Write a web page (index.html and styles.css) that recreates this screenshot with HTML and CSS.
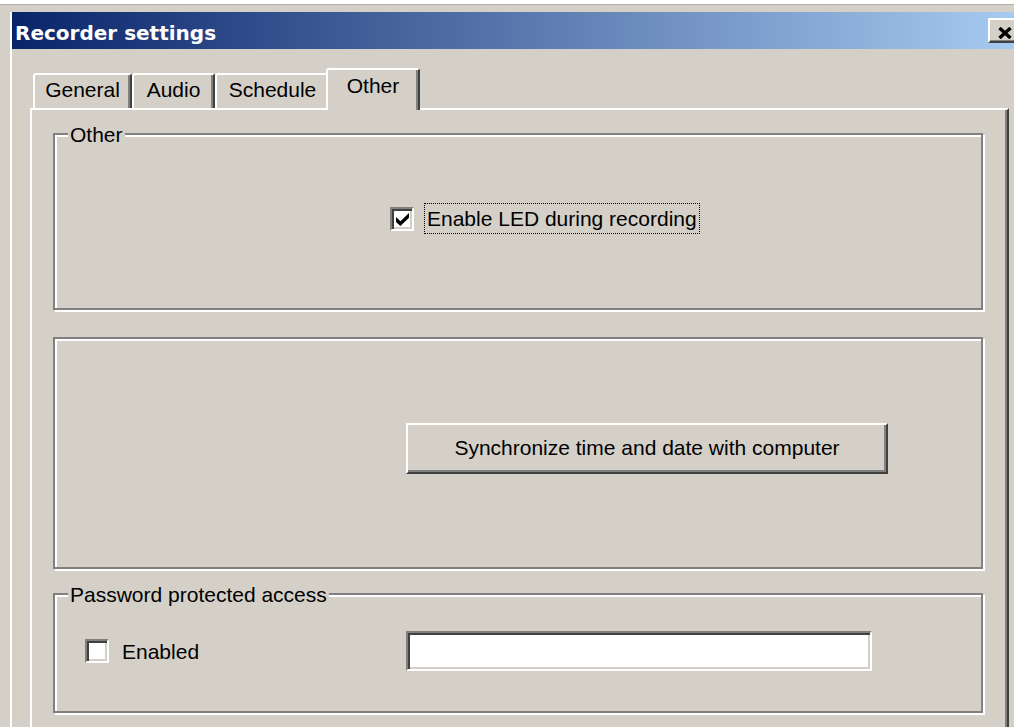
FILE: index.html
```html
<!DOCTYPE html>
<html lang="en">
<head>
<meta charset="utf-8">
<title>Recorder settings</title>
<link rel="stylesheet" href="styles.css">
</head>
<body>
<div class="window">
  <div class="frame">
    <div class="titlebar">
      <span class="title">Recorder settings</span>
      <span class="close-btn" aria-label="Close">
        <svg width="14" height="12" viewBox="0 0 14 12"><path d="M1.5 1 L12.5 11 M12.5 1 L1.5 11" stroke="#000" stroke-width="3.4" fill="none"/></svg>
      </span>
    </div>
    <div class="client">
      <div class="tabs">
        <div class="tab tab-general">General</div>
        <div class="tab tab-audio">Audio</div>
        <div class="tab tab-schedule">Schedule</div>
        <div class="tab tab-other active">Other</div>
      </div>
      <div class="panel">
        <div class="group group-led">
          <span class="group-label">Other</span>
          <label class="check-row">
            <span class="checkbox">
              <svg width="13" height="13" viewBox="0 0 7 7"><path d="M0 2.2 L2.4 4.4 L7 0 L7 2.6 L2.4 7 L0 4.8 Z" fill="#000"/></svg>
            </span>
            <span class="check-text focused">Enable LED during recording</span>
          </label>
        </div>
        <div class="group group-sync">
          <button class="btn" type="button">Synchronize time and date with computer</button>
        </div>
        <div class="group group-pass">
          <span class="group-label">Password protected access</span>
          <div class="pass-row">
            <label class="check-row">
              <span class="checkbox"></span>
              <span class="check-text">Enabled</span>
            </label>
            <span class="textbox"></span>
          </div>
        </div>
      </div>
    </div>
  </div>
</div>
</body>
</html>
```

FILE: styles.css
```css
* {
  box-sizing: border-box;
}

html,
body {
  margin: 0;
  height: 100%;
  overflow: hidden;
  background: #ffffff;
}

body {
  font-family: "Liberation Sans", Arial, sans-serif;
  font-size: 21px;
  line-height: 24px;
  color: #000000;
}

/* Window frame */
.window {
  width: 1014px;
  height: 723px;
  margin-top: 4px;
  border-top: 1px solid #b4b1aa;
  background: #d4d0c8;
  padding: 7px 0 0 10px;
  overflow: hidden;
}

.frame {
  height: 100%;
  border-left: 2px solid #ffffff;
}

/* Caption bar */
.titlebar {
  display: flex;
  align-items: flex-start;
  height: 37px;
  background: linear-gradient(to right, #0a246a 0%, #a6caf0 100%);
}

.title {
  padding: 9px 0 0 3px;
  font-family: "DejaVu Sans", Verdana, sans-serif;
  font-weight: bold;
  font-size: 20px;
  line-height: 24px;
  color: #ffffff;
}

.close-btn {
  display: block;
  flex: none;
  width: 29px;
  height: 25px;
  margin: 6px -3px 0 auto;
  padding: 7px 0 0 8px;
  background: #d4d0c8;
  border: 2px solid;
  border-color: #ffffff #404040 #404040 #ffffff;
  box-shadow: inset -1px -1px 0 #808080;
}

.close-btn svg {
  display: block;
}

/* Client area */
.client {
  padding-left: 18px;
}

.tabs {
  display: flex;
  align-items: flex-end;
  height: 40px;
  margin: 19px 0 0 3px;
}

.tab {
  height: 35px;
  padding-top: 3px;
  text-align: center;
  background: #d4d0c8;
  border-top: 2px solid #ffffff;
  border-left: 2px solid #ffffff;
  border-right: 2px solid #404040;
  border-radius: 3px 3px 0 0;
  box-shadow: inset -2px 0 0 #808080;
}

.tab-general {
  width: 99px;
}

.tab-audio {
  width: 83px;
}

.tab-schedule {
  width: 115px;
}

.tab-other {
  width: 94px;
}

.tab.active {
  position: relative;
  z-index: 1;
  height: 42px;
  margin: 0 0 -2px -4px;
  padding-top: 4px;
}

.panel {
  width: 979px;
  height: 619px;
  padding: 23px 0 0 21px;
  border-top: 2px solid #ffffff;
  border-left: 2px solid #ffffff;
  border-right: 2px solid #404040;
  box-shadow: inset -2px 0 0 #808080;
}

/* Etched group boxes */
.group {
  position: relative;
  width: 930px;
  border: 2px solid #808080;
  box-shadow: 2px 2px 0 #ffffff, inset 2px 2px 0 #ffffff;
}

.group-label {
  position: absolute;
  top: -12px;
  left: 13px;
  padding: 0 2px;
  background: #d4d0c8;
}

.group-led {
  height: 177px;
  margin-bottom: 27px;
  padding: 68px 0 0 335px;
}

.group-sync {
  height: 232px;
  margin-bottom: 24px;
  padding: 84px 0 0 351px;
}

.group-pass {
  height: 120px;
  padding: 36px 0 0 30px;
}

/* Check boxes */
.check-row {
  display: flex;
  align-items: center;
}

.checkbox {
  display: flex;
  align-items: center;
  justify-content: center;
  width: 24px;
  height: 24px;
  padding: 1px 0 0 1px;
  background: #ffffff;
  border: 2px solid;
  border-color: #808080 #ffffff #ffffff #808080;
  box-shadow: inset 2px 2px 0 #404040, inset -2px -2px 0 #d4d0c8;
}

.checkbox svg {
  display: block;
}

.check-text {
  margin-left: 10px;
  padding: 3px 2px 2px;
  border: 1px solid transparent;
}

.check-text.focused {
  border: 1px dotted #000000;
}

/* Push button */
.btn {
  display: block;
  width: 482px;
  height: 51px;
  margin: 0;
  padding: 0 0 2px;
  font: inherit;
  color: #000000;
  background: #d4d0c8;
  border: 2px solid;
  border-color: #ffffff #404040 #404040 #ffffff;
  box-shadow: inset -2px -2px 0 #808080;
}

/* Password row */
.pass-row {
  display: grid;
  grid-template-columns: 321px 466px;
  align-items: center;
}

.textbox {
  display: block;
  height: 40px;
  background: #ffffff;
  border: 2px solid;
  border-color: #808080 #ffffff #ffffff #808080;
  box-shadow: inset 2px 2px 0 #404040, inset -2px -2px 0 #d4d0c8;
}
```
